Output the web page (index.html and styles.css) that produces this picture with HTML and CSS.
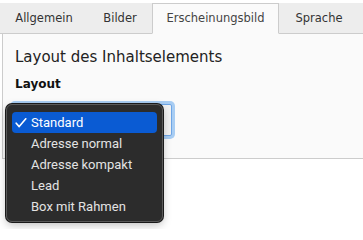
FILE: index.html
```html
<!DOCTYPE html>
<html>
<head>
<meta charset="utf-8">
<link rel="stylesheet" href="styles.css">
</head>
<body>
<div class="page">
  <div class="tabs">
    <div class="tab t1">Allgemein</div>
    <div class="tab t2">Bilder</div>
    <div class="tab t3 active">Erscheinungsbild</div>
    <div class="tab t4">Sprache</div>
    <div class="tab-fill"></div>
  </div>
  <div class="panel">
    <h2 class="heading">Layout des Inhaltselements</h2>
    <div class="label">Layout</div>
    <div class="select"></div>
  </div>
  <div class="menu">
    <div class="item selected"><svg class="check" width="12" height="10" viewBox="0 0 12 10"><polyline points="1.2,5.2 4.2,8.6 10.8,0.8" fill="none" stroke="#ffffff" stroke-width="1.6" stroke-linecap="round" stroke-linejoin="round"/></svg>Standard</div>
    <div class="item">Adresse normal</div>
    <div class="item">Adresse kompakt</div>
    <div class="item">Lead</div>
    <div class="item">Box mit Rahmen</div>
  </div>
</div>
</body>
</html>
```

FILE: styles.css
```css
html, body {
  margin: 0;
  padding: 0;
  background: #ffffff;
}
.page {
  position: relative;
  width: 363px;
  height: 229px;
  padding-top: 3px;
  box-sizing: border-box;
  font-family: "DejaVu Sans", Verdana, sans-serif;
  color: #212121;
}
.tabs {
  display: flex;
  height: 31px;
}
.tab {
  box-sizing: border-box;
  background: #ededed;
  border-bottom: 1px solid #cccccc;
  font-size: 11.5px;
  line-height: 30px;
  text-align: center;
  color: #333333;
}
.t1 { width: 88px; }
.t2 { width: 64px; }
.t3 { width: 127px; }
.t4 { width: 80px; }
.tab.active {
  background: #fafafa;
  border: 1px solid #cccccc;
  border-bottom: 1px solid #fafafa;
  color: #444444;
  line-height: 29px;
}
.tab-fill {
  flex: 1;
  background: #ededed;
  border-bottom: 1px solid #cccccc;
}
.panel {
  box-sizing: border-box;
  margin-left: 2px;
  height: 125px;
  background: #fafafa;
  border-left: 1px solid #cccccc;
  border-bottom: 1px solid #cccccc;
  padding: 14px 0 0 12px;
}
.heading {
  margin: 0;
  font-size: 15px;
  font-weight: normal;
  line-height: 19px;
  color: #222222;
}
.label {
  margin-top: 10px;
  font-size: 12px;
  font-weight: bold;
  line-height: 15px;
  color: #111111;
}
.select {
  margin-top: 12px;
  margin-left: -2px;
  width: 159px;
  height: 32px;
  box-sizing: border-box;
  background: #f2f2f2;
  border: 1px solid #6fa6e6;
  border-radius: 2px;
  box-shadow: 0 0 0 3px #a8cdf3;
}
.menu {
  position: absolute;
  left: 6px;
  top: 104px;
  width: 157px;
  height: 118px;
  box-sizing: border-box;
  background: #2c2c2c;
  border: 1px solid #5a5a5a;
  border-radius: 6px;
  box-shadow: 0 0 0 1px #1a1a1a, 0 3px 8px rgba(0,0,0,0.25);
  padding: 7px 5px 5px 5px;
  font-family: Roboto, "Liberation Sans", sans-serif;
  font-size: 13px;
}
.item {
  height: 21px;
  line-height: 21px;
  padding-left: 19px;
  color: #e3e3e3;
  border-radius: 4px;
  position: relative;
}
.item.selected {
  background: #0a5bd3;
  color: #ffffff;
}
.check {
  position: absolute;
  left: 3px;
  top: 6px;
}
```
